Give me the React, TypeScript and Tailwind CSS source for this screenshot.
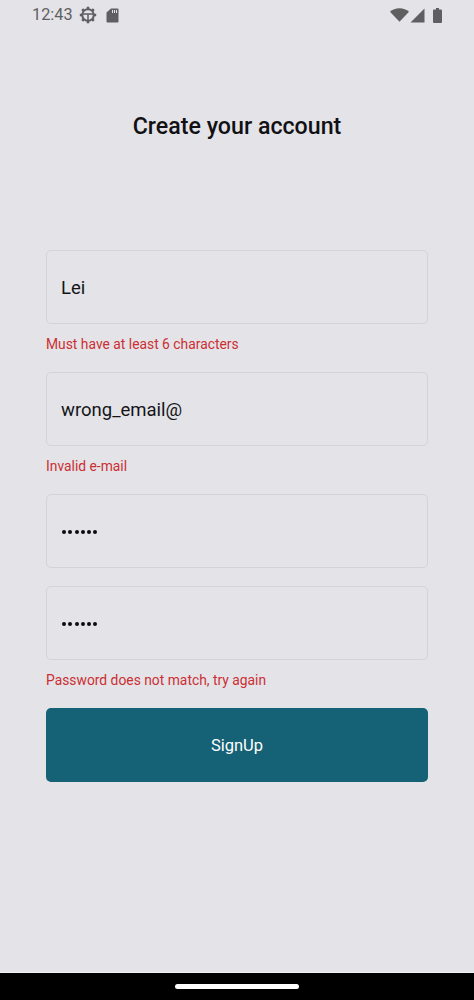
const font = { fontFamily: 'Roboto, sans-serif' };

function StatusBar() {
  return (
    <div className="flex h-[30px] items-center justify-between pl-[32px] pr-[32px] text-[#5f5f62]">
      <div className="flex items-center">
        <span className="text-[16.3px] leading-none">12:43</span>
        <svg className="ml-[6px]" width="18" height="18" viewBox="0 0 18 18" fill="none">
          <circle cx="9" cy="9" r="5.8" stroke="#5f5f62" strokeWidth="2" />
          <path d="M3.5 8h11M9 8v6" stroke="#5f5f62" strokeWidth="1.5" />
          <path d="M9 .8v2.4M9 14.8v2.4M.8 9h2.4M14.8 9h2.4M3.2 3.2l1.7 1.7M13.1 13.1l1.7 1.7M14.8 3.2l-1.7 1.7M4.9 13.1l-1.7 1.7" stroke="#5f5f62" strokeWidth="2.6" />
        </svg>
        <svg className="ml-[9px]" width="13" height="15" viewBox="0 0 13 15">
          <path d="M5 .5h6.5a1 1 0 0 1 1 1v12a1 1 0 0 1-1 1h-10a1 1 0 0 1-1-1V4.5z" fill="#5f5f62" />
          <path d="M6 2h1v3H6zM8 2h1v3H8zM10 2h1v3h-1z" fill="#e3e3e8" />
        </svg>
      </div>
      <div className="flex items-center">
        <svg width="19" height="14" viewBox="0 0 19 14">
          <path d="M0 3.8C2.5 1.5 5.7.3 9.5.3s7 1.2 9.5 3.5l-9.5 9.9z" fill="#5f5f62" />
        </svg>
        <svg className="ml-[1px]" width="15" height="15" viewBox="0 0 15 15">
          <path d="M14.5.5v14H.5z" fill="#5f5f62" />
        </svg>
        <svg className="ml-[8px]" width="9" height="15" viewBox="0 0 9 15">
          <path d="M3 0h3v1.5h2a1 1 0 0 1 1 1V14a1 1 0 0 1-1 1H1a1 1 0 0 1-1-1V2.5a1 1 0 0 1 1-1h2z" fill="#5f5f62" />
        </svg>
      </div>
    </div>
  );
}

function Field({ value, masked, error }: { value: string; masked?: boolean; error?: string }) {
  return (
    <div>
      <div className="flex h-[74px] items-center rounded-[5px] border border-[#d3d3d8] px-[14px] pt-[2px]">
        {masked ? (
          <div className="flex gap-[2.3px] pl-[1px]">
            {[0, 1, 2, 3, 4, 5].map((i) => (
              <span key={i} className="h-[4px] w-[4px] rounded-full bg-[#0c0c0f]" />
            ))}
          </div>
        ) : (
          <span className="text-[18.5px] leading-none text-[#151518]">{value}</span>
        )}
      </div>
      {error && <p className="mt-[12px] text-[13.85px] leading-[17px] text-[#cc2f33]">{error}</p>}
    </div>
  );
}

export default function App() {
  return (
    <div style={font} className="flex h-[1000px] w-[474px] flex-col overflow-hidden bg-[#e3e3e8]">
      <StatusBar />
      <h1 className="mt-[82px] text-center text-[23.2px] font-medium leading-[28px] text-[#111114]">
        Create your account
      </h1>
      <div className="mx-[46px] mt-[110px] flex flex-col">
        <Field value="Lei" error="Must have at least 6 characters" />
        <div className="mt-[19px]">
          <Field value="wrong_email@" error="Invalid e-mail" />
        </div>
        <div className="mt-[19px]">
          <Field value="" masked />
        </div>
        <div className="mt-[18px]">
          <Field value="" masked error="Password does not match, try again" />
        </div>
        <button className="mt-[19px] flex h-[74px] items-center justify-center rounded-[5px] bg-[#156176] pt-[2px] text-[16.5px] text-white">
          SignUp
        </button>
      </div>
      <div className="mt-auto flex h-[28px] items-center justify-center border-t border-[#f2f2f4] bg-black">
        <div className="h-[5px] w-[124px] rounded-full bg-white" />
      </div>
    </div>
  );
}
